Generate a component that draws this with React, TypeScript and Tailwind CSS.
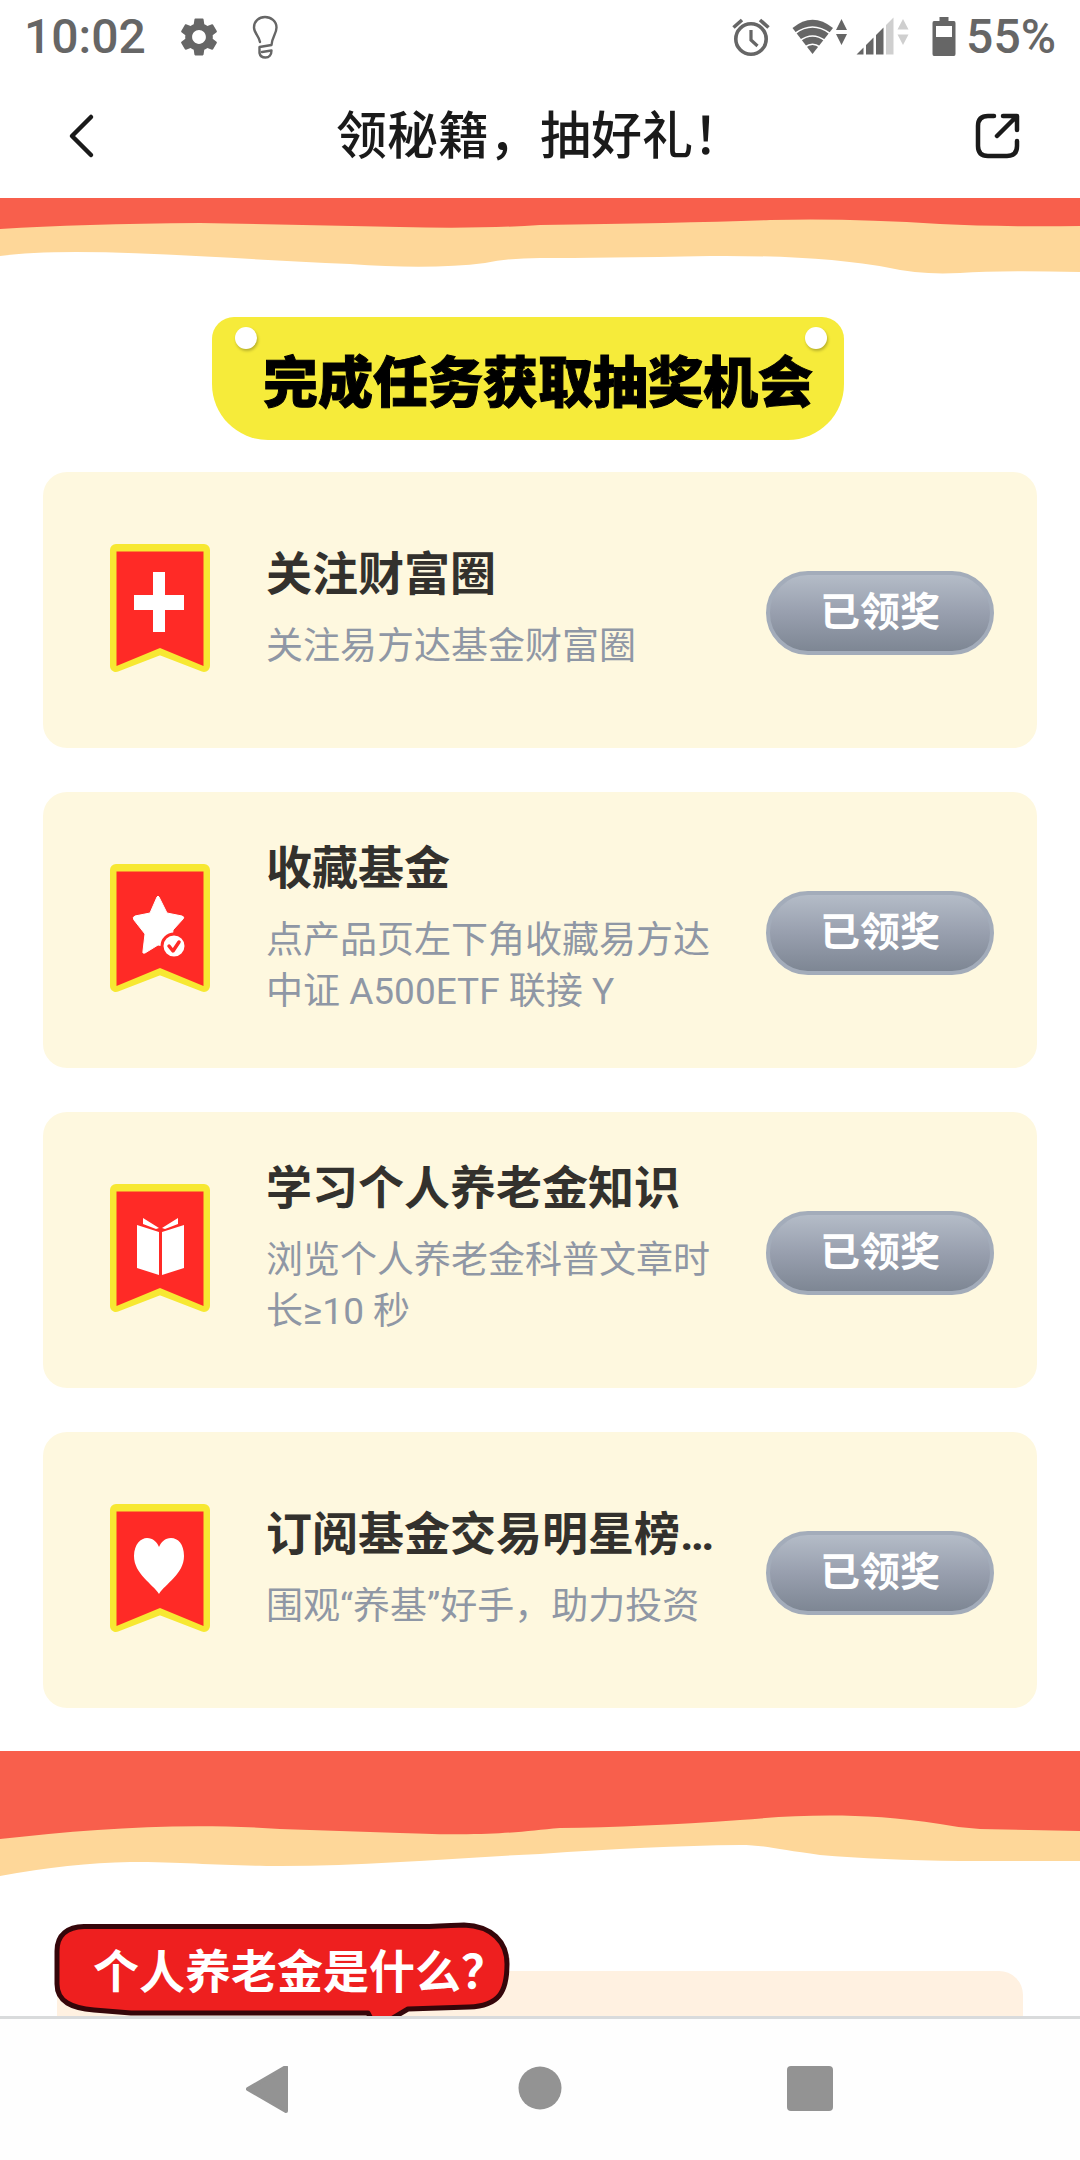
import React from 'react';
import { MdSettings } from 'react-icons/md';

type IconName = 'plus' | 'star' | 'book' | 'heart';

interface Task {
    icon: IconName;
    title: string;
    desc: string;
}

const tasks: Task[] = [
    { icon: 'plus', title: '关注财富圈', desc: '关注易方达基金财富圈' },
    { icon: 'star', title: '收藏基金', desc: '点产品页左下角收藏易方达中证 A500ETF 联接 Y' },
    { icon: 'book', title: '学习个人养老金知识', desc: '浏览个人养老金科普文章时长≥10 秒' },
    { icon: 'heart', title: '订阅基金交易明星榜…', desc: '围观“养基”好手，助力投资' },
];

const BulbIcon: React.FC = () => (
    <svg className="w-7 h-11" viewBox="0 0 28 44" fill="none" stroke="#666" strokeWidth="2.400" strokeLinecap="round" strokeLinejoin="round">
        <path d="M8 27C7 21 2 18 2 12.500C2 6 7 2 13 2s11.500 4 11.500 10.500C24.500 19 20 22 19.500 30L7.500 32V38C8 41 10 42.500 13.500 42.500S19.500 40 19.500 35.500L10 37" />
    </svg>
);

const AlarmIcon: React.FC = () => (
    <svg className="w-[38px] h-10" viewBox="0 0 38 40" fill="none" stroke="#666">
        <circle cx="19" cy="22" r="15.200" strokeWidth="3.600" />
        <path d="M1.500 10.500L10 3M36.500 10.500L28 3" strokeWidth="3.600" />
        <path d="M19 13V23L25.500 29" strokeWidth="3.200" />
    </svg>
);

const WifiIcon: React.FC = () => (
    <svg className="w-14 h-10" viewBox="0 0 56 40">
        <path d="M20.500 37L0.500 11Q20.500 -5.500 41 11Z" fill="#666" />
        <path d="M3 16.500Q20.500 3.500 38 16.500M8 23.500Q20.500 14.500 33 23.500M13 30Q20.500 24.500 28 30" fill="none" stroke="#fff" strokeWidth="1.600" />
        <path d="M49.500 2L55 13H44ZM49.500 28L55 17H44Z" fill="#666" />
    </svg>
);

const SignalIcon: React.FC = () => (
    <svg className="w-[54px] h-10" viewBox="0 0 54 40">
        <path d="M0.500 37.500L7.500 30.500V37.500ZM10 28L17.500 20.500V37.500H10ZM20 18L27.500 10.500V37.500H20Z" fill="#666" />
        <path d="M30 8L37.500 0.500V37.500H30ZM47 2L52.500 12.500H41.500ZM47 28L52.500 17.500H41.500Z" fill="#cfcfcf" />
    </svg>
);

const BatteryIcon: React.FC = () => (
    <svg className="w-6 h-10" viewBox="0 0 24 40">
        <path d="M7.500 0H16.500V4H22Q23.500 4 23.500 6V37Q23.500 39 22 39H2Q0.500 39 0.500 37V6Q0.500 4 2 4H7.500Z" fill="#666" />
        <rect x="4" y="9" width="16" height="11" fill="#fff" />
    </svg>
);

const glyphs: Record<IconName, React.ReactNode> = {
    plus: <path d="M43 28H55V51H74V66H55V88H43V66H24V51H43Z" fill="#fff" />,
    star: (
        <>
            <path d="M47 33Q48 31 49 33L57 49L72 52Q75 53 73 55L63 66L61 83L48 81L35 89Q32 90 33 87L35 70L24 56Q22 53 25 52L40 49Z" fill="#fff" stroke="#fff" strokeWidth="1" strokeLinejoin="round" />
            <circle cx="64" cy="82" r="12" fill="#fff" stroke="#ff2a26" strokeWidth="3" />
            <path d="M59 82L63 87L69 78" fill="none" stroke="#ff2a26" strokeWidth="3.500" strokeLinecap="round" strokeLinejoin="round" />
        </>
    ),
    book: (
        <path d="M27 41L49 48V91L27 84ZM74 41L52 48V91L74 84ZM33 34L49 44L46 45L33 40ZM68 34L52 44L55 45L68 40Z" fill="#fff" />
    ),
    heart: (
        <path d="M49 90C43 80 24 70 24 52C24 40 31 34 37 34C43 34 47 38 49 43C51 38 55 34 61 34C68 34 74 40 74 52C74 70 55 80 49 90Z" fill="#fff" />
    ),
};

const Ribbon: React.FC<{ name: IconName }> = ({ name }) => (
    <svg className="w-[100px] h-[132px] shrink-0" viewBox="0 0 100 132">
        <path d="M6 6H94V122L50 105L6 122Z" fill="#f7e832" stroke="#f7e832" strokeWidth="12" strokeLinejoin="round" />
        <path d="M6.500 7.500H93.500V122L50 104L6.500 122Z" fill="#ff2a26" />
        {glyphs[name]}
    </svg>
);

const TaskCard: React.FC<{ task: Task }> = ({ task }) => (
    <li className="flex items-center min-h-[276px] pl-[67px] pr-[43px] rounded-3xl bg-[#fef8df]">
        <Ribbon name={task.icon} />
        <div className="flex-1 min-w-0 pt-0.5 ml-14 mr-11">
            <h3 className="text-[46px] leading-[46px] font-bold text-[#33312d] whitespace-nowrap">{task.title}</h3>
            <p className="mt-6 text-[37px] leading-[51px] text-[#8f97a5]">{task.desc}</p>
        </div>
        <button className="shrink-0 w-[228px] h-[84px] mt-1.5 rounded-full border-4 border-[#a3acba] bg-linear-to-b from-[#b7bfca] via-[#989fae] to-[#7b8491] bg-origin-border text-[40px] leading-[40px] font-bold text-white">
            已领奖
        </button>
    </li>
);

const App: React.FC = () => {
    return (
        <div className="flex flex-col h-screen bg-white font-[Roboto,'Noto_Sans_CJK_SC',sans-serif]">
            <div className="flex items-center justify-between shrink-0 h-[72px] pt-0.5 px-6 text-[48px] leading-[56px] font-medium text-[#666]">
                <div className="flex items-center">
                    <span>10:02</span>
                    <MdSettings className="w-[46px] h-[46px] ml-[30px]" />
                    <div className="ml-[30px]">
                        <BulbIcon />
                    </div>
                </div>
                <div className="flex items-center">
                    <AlarmIcon />
                    <div className="flex items-center gap-2 mx-[22px]">
                        <WifiIcon />
                        <SignalIcon />
                    </div>
                    <BatteryIcon />
                    <span className="ml-2.5">55%</span>
                </div>
            </div>

            <header className="flex items-center justify-between shrink-0 h-[126px] px-[58px]">
                <button aria-label="返回" className="flex justify-center w-12">
                    <svg className="w-12 h-12" viewBox="0 0 48 48" fill="none" stroke="#1a1a1a" strokeWidth="4.500" strokeLinecap="round" strokeLinejoin="round">
                        <path d="M33 6L14 25L33 44" />
                    </svg>
                </button>
                <h1 className="pt-1 text-[51px] leading-[60px] font-medium text-[#1a1a1a]">领秘籍，抽好礼！</h1>
                <button aria-label="分享" className="flex justify-center w-12">
                    <svg className="w-12 h-12" viewBox="0 0 48 48" fill="none" stroke="#1a1a1a" strokeWidth="4.500" strokeLinecap="round" strokeLinejoin="round">
                        <path d="M20 5H14Q4 5 4 15V35Q4 45 14 45H33Q43 45 43 35V30" />
                        <path d="M29 5H43V19M42 6L23 25" />
                    </svg>
                </button>
            </header>

            <main className="flex-1 min-h-0 overflow-hidden">
                <section>
                    <svg className="block w-full h-[78px]" viewBox="0 0 1080 78" preserveAspectRatio="none">
                        <path d="M0 0H1080V74Q1000 72 960 75Q920 77 890 70Q820 57 710 58Q600 60 540 60Q510 60 485 65Q430 72 350 66C250 62 160 54 76 54Q30 54 0 58Z" fill="#fed799" />
                        <path d="M0 0H1080V28Q1000 29 940 26Q850 20 770 22Q680 25 540 27Q480 31 400 29Q300 27 200 25Q80 26 0 31Z" fill="#f85f4c" />
                    </svg>
                    <div className="flex justify-center pr-6 mt-[41px]">
                        <div className="relative h-[123px] pl-[51px] pr-[31px] pt-[34px] rounded-t-[22px] rounded-b-[56px] bg-[#f6eb3a]">
                            <span className="absolute top-[10px] left-[23px] w-[22px] h-[22px] rounded-full bg-white shadow-[1px_2px_3px_rgba(0,0,0,0.25)]" />
                            <span className="absolute top-[10px] right-[17px] w-[22px] h-[22px] rounded-full bg-white shadow-[1px_2px_3px_rgba(0,0,0,0.25)]" />
                            <h2 className="text-[55px] leading-[64px] font-black text-black [-webkit-text-stroke:1px_black]">完成任务获取抽奖机会</h2>
                        </div>
                    </div>
                    <ul className="flex flex-col gap-11 px-[43px] mt-8">
                        {tasks.map((task) => (
                            <TaskCard key={task.icon} task={task} />
                        ))}
                    </ul>
                </section>

                <section className="mt-[43px]">
                    <svg className="block w-full h-[126px]" viewBox="0 0 1080 126" preserveAspectRatio="none">
                        <path d="M0 0H1080V110H960Q880 109 820 104C780 99 765 94 740 94Q650 95 540 103C450 107 370 115 280 115C220 115 190 111 130 111Q70 112 0 125Z" fill="#fed799" />
                        <path d="M0 0H1080V80L980 78Q960 77 940 73C860 61 800 64 740 69Q640 76 560 77C520 80 500 86 400 82L280 78C180 71 90 78 0 88Z" fill="#f85f4c" />
                    </svg>
                    <div className="px-[54px] mt-[45px]">
                        <h2 className="relative z-10 w-[456px] h-[108px] pt-[18px] pl-[39px] text-[46px] leading-[64px] font-bold text-white">
                            <svg className="absolute inset-0 w-full h-full -z-10" viewBox="0 0 456 108">
                                <path
                                    d="M30 4.500H375C395 4 400 3 410 3C438 4 453 20 453 42C453 70 445 84 415 85L354 87L322 106L314 91H77L40 88C18 86 3 80 3 62V29C3 12 14 5 30 4.500Z"
                                    fill="#ee1f1f"
                                    stroke="#35060a"
                                    strokeWidth="5"
                                    strokeLinejoin="round"
                                />
                            </svg>
                            个人养老金是什么？
                        </h2>
                        <div className="h-60 mx-[3px] -mt-[59px] rounded-3xl bg-[#fff1e1]" />
                    </div>
                </section>
            </main>

            <nav className="flex items-center justify-center shrink-0 h-36 gap-[222px] border-t-[3px] border-[#d9dbdc] bg-[#fefefe]">
                <button aria-label="后退">
                    <svg className="w-12 h-12" viewBox="0 0 48 48" fill="#939393" stroke="#939393" strokeWidth="4" strokeLinejoin="round">
                        <path d="M2 23L40 1V45Z" />
                    </svg>
                </button>
                <button aria-label="主页">
                    <svg className="w-12 h-12" viewBox="0 0 48 48" fill="#939393">
                        <circle cx="24" cy="22" r="21.500" />
                    </svg>
                </button>
                <button aria-label="最近任务">
                    <svg className="w-12 h-12" viewBox="0 0 48 48" fill="#939393">
                        <rect x="1" y="0" width="46" height="45" rx="4" />
                    </svg>
                </button>
            </nav>
        </div>
    );
};

export default App;
